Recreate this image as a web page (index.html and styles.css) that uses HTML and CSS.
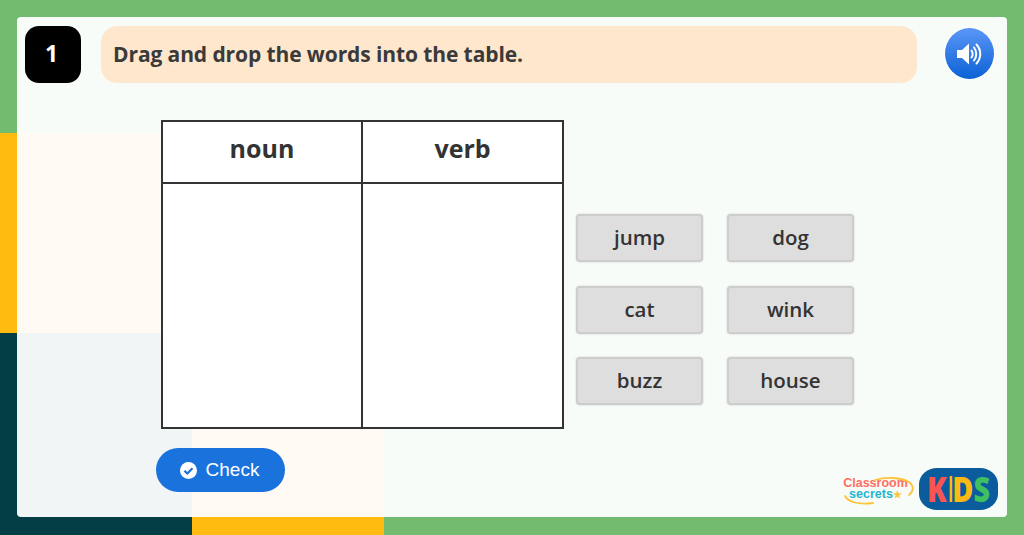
FILE: index.html
```html
<!DOCTYPE html>
<html>
<head>
    <meta charset="UTF-8">
    <meta name="viewport" content="width=device-width, initial-scale=1.0">
    <title>Drag and drop</title>
    <link rel="stylesheet" href="styles.css">
</head>
<body>
    <div class="panel">
        <div class="top">
            <div class="num">1</div>
            <div class="prompt">Drag and drop the words into the table.</div>
            <div class="sound">
                <svg width="28" height="24" viewBox="0 0 28 24" fill="none">
                    <path d="M1 8h5l7-6.500v21l-7-6.500H1z" fill="#fff"/>
                    <path d="M15.500 8.500c1.500 2.200 1.500 4.800 0 7M18 5.500c3 3.800 3 9.200 0 13M20.500 2.500c5 5.500 5 13.500 0 19" stroke="#fff" stroke-width="2" stroke-linecap="round"/>
                </svg>
            </div>
        </div>
        <div class="main">
            <table class="sortTable">
                <tr><th>noun</th><th>verb</th></tr>
                <tr><td></td><td></td></tr>
            </table>
            <div class="words">
                <div class="word">jump</div>
                <div class="word">dog</div>
                <div class="word">cat</div>
                <div class="word">wink</div>
                <div class="word">buzz</div>
                <div class="word">house</div>
            </div>
        </div>
        <div class="bottom">
            <button class="checkBtn" type="button">
                <svg width="17" height="17" viewBox="0 0 17 17">
                    <circle cx="8.500" cy="8.500" r="8.500" fill="#fff"/>
                    <path d="M4.500 8.700l2.800 2.800 5.200-5.200" fill="none" stroke="#1a73dc" stroke-width="2.200"/>
                </svg>
                Check
            </button>
            <div class="logos">
                <div class="csLogo">
                    <svg class="csArc" width="71" height="34" viewBox="0 0 71 34" fill="none">
                        <path d="M32 8C42 5 58 5 66 10c5 4 5 9 0 13M2 24c3 6 14 9 28 7" stroke="#fdc33a" stroke-width="1.800" stroke-linecap="round"/>
                    </svg>
                    <span class="csTop">Classroom</span>
                    <span class="csBot">secrets<i>★</i></span>
                </div>
                <div class="kids"><div class="kidsText"><span class="k">K</span><span class="i">I</span><span class="d">D</span><span class="s">S</span></div></div>
            </div>
        </div>
    </div>
</body>
</html>
```

FILE: styles.css
```css
*{margin: 0; padding: 0; box-sizing: border-box;}
html, body{ height: 535px; overflow: hidden; }
body{
    padding: 17px 17px 18px;
    font-family: "Open Sans", sans-serif;
    color: #333;
    background-color: #72bb6f;
    background-image:
        linear-gradient(#ffbb0f, #ffbb0f),
        linear-gradient(#033e47, #033e47),
        linear-gradient(#ffbb0f, #ffbb0f);
    background-repeat: no-repeat;
    background-size: 192px 200px, 192px 202px, 192px 202px;
    background-position: 0 133px, 0 333px, 192px 333px;
}
.panel{
    width: 990px; height: 500px; padding-top: 9px; border-radius: 4px;
    background-color: rgba(255,255,255,.95);
    background-image: linear-gradient(#fffaf3, #fffaf3), linear-gradient(#fffaf3, #fffaf3);
    background-repeat: no-repeat;
    background-size: 175px 200px, 192px 184px;
    background-position: 0 116px, 175px 316px;
    display: flex; flex-direction: column;
}

.top{ display: flex; align-items: flex-start; padding: 0 13px 0 8px; }
.num{ width: 56px; height: 57px; padding: 0 3px 3px 0; border-radius: 14px; background: #000; color: #fff; font-size: 23px; font-weight: 700; display: flex; align-items: center; justify-content: center; }
.prompt{ flex: 1; height: 57px; margin: 0 28px 0 20px; padding-left: 12px; border-radius: 16px; background: #fee7cc; font-size: 21px; font-weight: 700; letter-spacing: -.1px; line-height: 56px; color: #3a3a3a; }
.sound{ width: 49px; height: 51px; margin-top: 2px; border-radius: 50%; background: linear-gradient(#5b96f7, #0b62d6); box-shadow: 0 0 0 1px #fff; display: flex; align-items: center; justify-content: center; }

.main{ display: flex; margin: 37px 0 0 144px; }
.sortTable{ width: 403px; height: 309px; border-collapse: collapse; background: #fff; table-layout: fixed; }
.sortTable th, .sortTable td{ border: 2px solid #333; }
.sortTable th{ height: 62px; font-size: 25px; font-weight: 700; padding-bottom: 8px; }
.sortTable th:first-child{ width: 200px; }

.words{ display: grid; grid-template-columns: 127px 127px; grid-auto-rows: 48px; gap: 23.5px 24px; margin: 94px 0 0 12px; align-self: flex-start; }
.word{ padding-bottom: 2px; background: #dedede; border: 2px solid #cdcdcd; border-radius: 4px; box-shadow: 0 0 2px rgba(0,0,0,.2); font-size: 20.5px; font-weight: 600; color: #333; display: flex; align-items: center; justify-content: center; }

.bottom{ display: flex; justify-content: space-between; padding: 19px 9px 0 139px; }
.checkBtn{ width: 129px; height: 44px; padding-right: 2px; border: 0; border-radius: 22px; background: #1a73dc; color: #fff; font-family: "Liberation Sans", sans-serif; font-size: 19px; display: flex; align-items: center; justify-content: center; gap: 9px; }

.logos{ display: flex; align-items: center; gap: 5px; margin-top: 20px; height: 42px; }
.csLogo{ position: relative; width: 71px; height: 34px; padding: 6px 6px 0 0; display: flex; flex-direction: column; align-items: center; font-family: "Liberation Sans", sans-serif; font-weight: 700; line-height: 11px; }
.csArc{ position: absolute; left: 0; top: 0; }
.csTop{ color: #ff6f61; font-size: 12.500px; }
.csBot{ color: #22b5cf; font-size: 12.500px; line-height: 10px; }
.csBot i{ color: #fdc33a; font-style: normal; font-size: 10px; }
.kids{ width: 79px; height: 42px; border-radius: 18px / 16px; background: #0a5c9c; display: flex; align-items: center; justify-content: center; }
.kidsText{ display: flex; font-size: 36px; line-height: 42px; font-weight: 800; transform: scaleX(.8); }
.k{ color: #f9544f; }
.i{ color: #fdb913; font-weight: 400; margin-right: -3px; }
.d{ color: #fdb913; }
.s{ color: #3fbf5f; }
```
